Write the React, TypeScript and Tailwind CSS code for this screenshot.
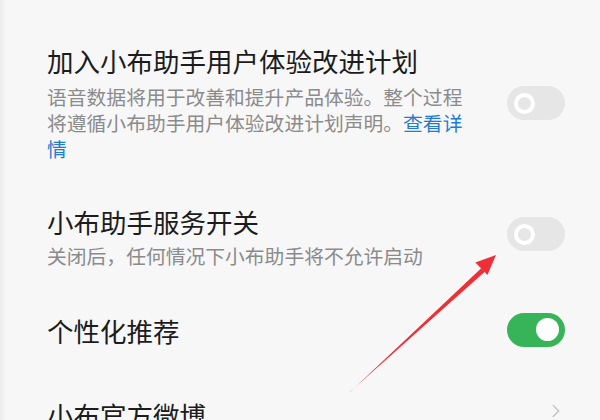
import { ChevronRight } from 'lucide-react';

const font = { fontFamily: '"Noto Sans CJK SC", "Noto Sans", sans-serif' };

function Toggle({ on }: { on?: boolean }) {
  if (on) {
    return (
      <div className="flex h-[34px] w-[58px] shrink-0 items-center justify-end rounded-full bg-[#36b457] pr-[6px]">
        <div className="h-[23px] w-[23px] rounded-full bg-white" />
      </div>
    );
  }
  return (
    <div className="flex h-[34px] w-[58px] shrink-0 items-center rounded-full bg-[#e6e6e6] pl-[7px]">
      <div className="h-[21px] w-[21px] rounded-full border-4 border-white" />
    </div>
  );
}

// Tapered red annotation arrow drawn on top of the list
function Arrow() {
  return (
    <svg className="pointer-events-none absolute inset-0" width="600" height="420" viewBox="0 0 600 420">
      <polygon points="349.6,392.4 350.4,391.6 484.8,271.8 481.2,268.2" fill="#ee2f35" />
      <polygon points="496,255 487.4,275 475.4,262.4" fill="#ee2f35" />
    </svg>
  );
}

export default function App() {
  return (
    <div className="relative flex h-[420px] w-[600px] overflow-hidden bg-[#f7f7f7]" style={font}>
      <div className="w-[6px] shrink-0 bg-gradient-to-r from-[#ebebeb] to-[#f7f7f7]" />
      <div className="flex flex-1 flex-col pl-[41px] pr-[35px]">
        <div className="flex items-center justify-between pt-[44px]">
          <div className="w-[425px]">
            <div className="text-[26.5px] leading-[34px] text-[#1c1c1c]">加入小布助手用户体验改进计划</div>
            <div className="mt-[6px] text-[19.8px] leading-[26px] text-[#8b8b8b]">
              语音数据将用于改善和提升产品体验。整个过程将遵循小布助手用户体验改进计划声明。
              <span className="text-[#1f7bd3]">查看详情</span>
            </div>
          </div>
          <Toggle />
        </div>

        <div className="mt-[43px] flex items-center justify-between">
          <div>
            <div className="text-[26.5px] leading-[34px] text-[#1c1c1c]">小布助手服务开关</div>
            <div className="mt-[4px] text-[19.8px] leading-[26px] text-[#8b8b8b]">关闭后，任何情况下小布助手将不允许启动</div>
          </div>
          <div className="-mt-[6px]">
            <Toggle />
          </div>
        </div>

        <div className="mt-[45px] flex items-center justify-between">
          <div className="text-[26.5px] leading-[34px] text-[#1c1c1c]">个性化推荐</div>
          <div className="-mt-[3px]">
            <Toggle on />
          </div>
        </div>

        <div className="mt-[50px] flex items-center justify-between">
          <div className="text-[26.5px] leading-[34px] text-[#1c1c1c]">小布官方微博</div>
          <ChevronRight className="-mt-[8px] mr-[-2px] h-[22px] w-[22px] text-[#c4c4c4]" strokeWidth={1.6} />
        </div>
      </div>
      <Arrow />
    </div>
  );
}
